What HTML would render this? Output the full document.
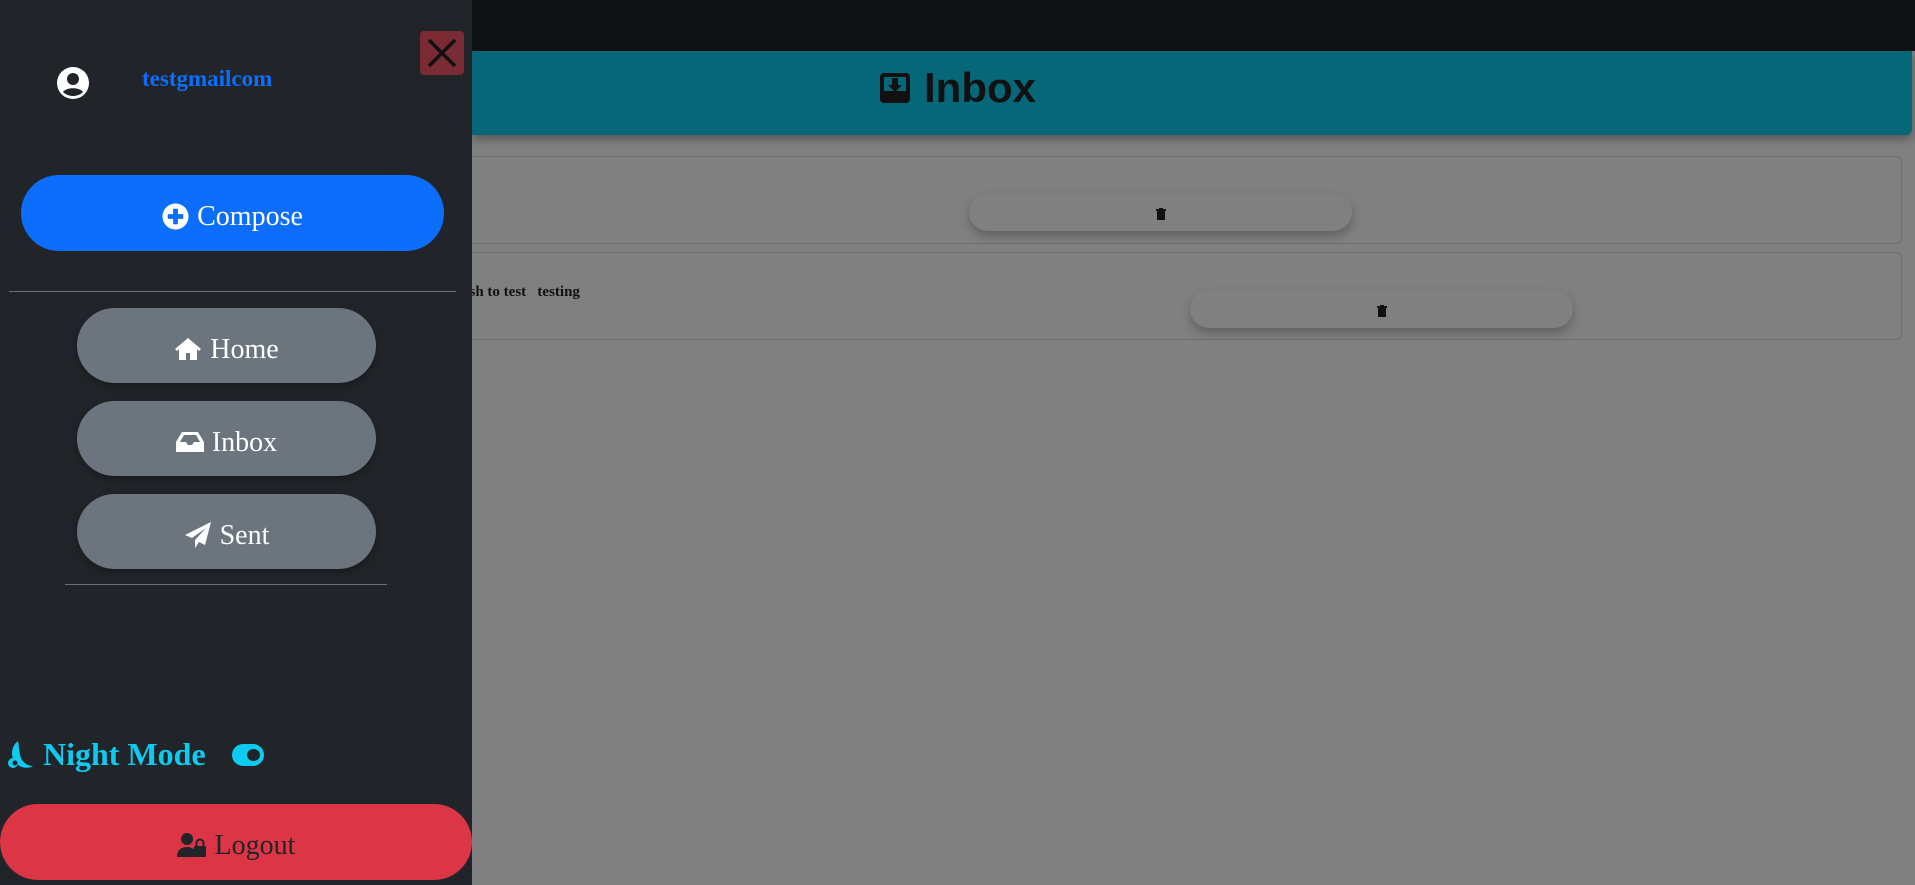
<!DOCTYPE html>
<html><head><style>
*{margin:0;padding:0;box-sizing:border-box}
body{width:1915px;height:885px;overflow:hidden;background:#808080;position:relative;font-family:"Liberation Serif",serif}
.abs{position:absolute}
.top{left:0;top:0;width:1915px;height:51px;background:#111216}
.hdr{left:472px;top:51px;width:1440px;height:84px;background:#066779;border-radius:0 0 6px 0;box-shadow:0 4px 10px rgba(0,0,0,.35)}
.title{left:880px;top:64px;font-family:"Liberation Sans",sans-serif;font-weight:bold;font-size:42px;color:#111;display:flex;align-items:center;gap:14px}
.card{left:440px;width:1462px;height:88px;border:1px solid #6e6e6e;border-radius:5px;background:#808080}
.tbtn{width:383px;height:38px;border-radius:19px;background:#808080;box-shadow:0 5px 10px rgba(0,0,0,.25);display:flex;align-items:center;justify-content:center;padding-top:4px}
.side{left:0;top:0;width:472px;height:885px;background:#212529}
.pill{border-radius:40px;display:flex;align-items:center;justify-content:center;gap:8px;color:#fff;font-size:28px}
.pill span{position:relative;top:4px}
.gray{left:77px;width:299px;height:75px;background:#6c757d;box-shadow:0 3px 8px rgba(0,0,0,.3)}
.line{height:1px;background:#6c6f73}
</style></head><body>
<div class="abs top"></div>
<div class="abs hdr"></div>
<div class="abs title"><svg width="30" height="30" viewBox="0 0 30 30"><rect x="0" y="0" width="30" height="30" rx="4" fill="#111"/><rect x="4" y="4" width="22" height="14" fill="#066779"/><path d="M12 5h6v7h4l-7 7-7-7h4z" fill="#111"/></svg><span>Inbox</span></div>
<div class="abs card" style="top:156px"></div>
<div class="abs tbtn" style="left:969px;top:193px"><svg width="10" height="12" viewBox="0 0 10 12"><rect x="0" y="1" width="10" height="2" fill="#111"/><rect x="3" y="0" width="4" height="2" fill="#111"/><rect x="1" y="3" width="8" height="9" fill="#111"/></svg></div>
<div class="abs card" style="top:252px"></div>
<div class="abs" style="left:462px;top:284px;font-size:15px;font-weight:bold;color:#111">ash to test &nbsp;&nbsp;testing</div>
<div class="abs tbtn" style="left:1190px;top:290px"><svg width="10" height="12" viewBox="0 0 10 12"><rect x="0" y="1" width="10" height="2" fill="#111"/><rect x="3" y="0" width="4" height="2" fill="#111"/><rect x="1" y="3" width="8" height="9" fill="#111"/></svg></div>

<div class="abs side"></div>
<div class="abs" style="left:420px;top:31px;width:44px;height:44px;background:#7a2b34;border-radius:4px"><svg width="44" height="44"><path d="M9 9L35 35M35 9L9 35" stroke="#111" stroke-width="3.5"/></svg></div>
<svg class="abs" style="left:57px;top:67px" width="32" height="32" viewBox="0 0 32 32"><circle cx="16" cy="16" r="16" fill="#fff"/><circle cx="16" cy="12" r="6" fill="#212529"/><path d="M6 25c3-5 17-5 20 0c-3 3-7 4-10 4s-7-1-10-4z" fill="#212529"/></svg>
<div class="abs" style="left:142px;top:66px;font-size:23px;color:#0d6efd;font-weight:bold">testgmailcom</div>
<div class="abs pill" style="left:21px;top:175px;width:423px;height:76px;background:#0d6efd"><svg width="27" height="27" viewBox="0 0 28 28" style="position:relative;top:3px"><circle cx="14" cy="14" r="13.5" fill="#fff"/><path d="M11.5 6h5v5.5H22v5h-5.5V22h-5v-5.5H6v-5h5.5z" fill="#0d6efd"/></svg><span>Compose</span></div>
<div class="abs line" style="left:9px;top:291px;width:447px"></div>
<div class="abs pill gray" style="top:308px"><svg width="28" height="24" viewBox="0 0 28 24" style="position:relative;top:3px"><path d="M14 1L1 12l2 2 2-1.7V23h7v-7h4v7h7V12.3L25 14l2-2z" fill="#fff"/></svg><span>Home</span></div>
<div class="abs pill gray" style="top:401px"><svg width="28" height="22" viewBox="0 0 28 22" style="position:relative;top:3px"><path d="M6 1h16l6 10v10H0V11z M4 11h6l2 3h4l2-3h6L20 4H8z" fill="#fff" fill-rule="evenodd"/></svg><span>Inbox</span></div>
<div class="abs pill gray" style="top:494px"><svg width="28" height="28" viewBox="0 0 28 28" style="position:relative;top:3px"><path d="M27 1L1 14l7 3 14-10-11 12v8l4-6 6 3z" fill="#fff"/></svg><span>Sent</span></div>
<div class="abs line" style="left:65px;top:584px;width:322px"></div>
<div class="abs" style="left:6px;top:736px;display:flex;align-items:center;color:#0dcaf0;font-weight:bold;font-size:32px"><svg width="27" height="28" viewBox="0 0 27 28"><path d="M12 0C4 6 4 18 12 24c4 3 10 4 15 1c-5 0-10-3-12-8C13 11 13 5 12 0z" fill="#0dcaf0"/><circle cx="7" cy="22" r="5" fill="#0dcaf0"/><circle cx="9" cy="22" r="2.5" fill="#212529"/></svg><span style="margin-left:10px">Night Mode</span>
<span style="margin-left:26px;width:32px;height:22px;border-radius:11px;background:#0dcaf0;position:relative;display:inline-block"><span style="position:absolute;right:4px;top:5px;width:13px;height:12px;border-radius:50%;background:#212529"></span></span></div>
<div class="abs pill" style="left:0;top:804px;width:472px;height:76px;background:#dc3545;color:#212529"><svg width="30" height="24" viewBox="0 0 30 24" style="position:relative;top:3px"><circle cx="10" cy="6" r="6" fill="#212529"/><path d="M0 24c0-7 4-10 10-10 3 0 5 1 7 2v8z" fill="#212529"/><rect x="17" y="13" width="12" height="11" rx="1" fill="#212529"/><path d="M19.5 13v-3a3.5 3.5 0 017 0v3" stroke="#212529" stroke-width="2" fill="none"/></svg><span>Logout</span></div>
</body></html>
